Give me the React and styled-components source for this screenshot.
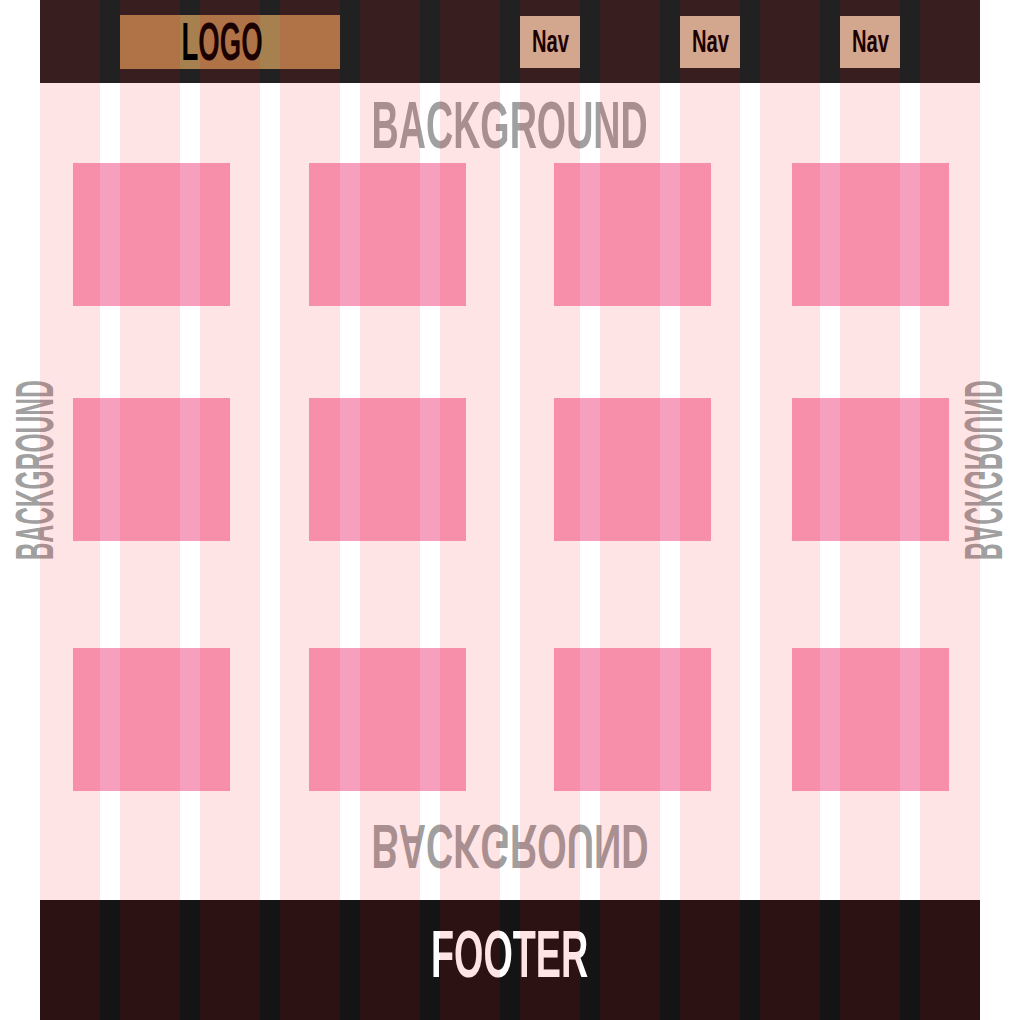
import React from "react";
import styled, { createGlobalStyle, css } from "styled-components";

const GlobalStyle = createGlobalStyle`
  html, body {
    margin: 0;
    padding: 0;
    background: #fff;
  }
  body {
    font-family: "Liberation Sans", Arial, sans-serif;
  }
`;

// narrow display lettering, squeezed with a transform
const condensed = css`
  display: inline-block;
  font-family: "Liberation Sans", Arial, sans-serif;
  font-weight: 700;
  line-height: 1;
  white-space: nowrap;
`;

const Page = styled.div`
  position: relative;
  width: 1020px;
  min-height: 1020px;
  display: flex;
  flex-direction: column;
`;

const Header = styled.header`
  height: 83px;
  margin: 0 40px;
  background: #212121;
  display: grid;
  grid-template-columns: repeat(12, 60px);
  column-gap: 20px;
  align-items: center;
`;

const Logo = styled.a`
  grid-column: 2 / span 3;
  height: 54px;
  padding-right: 15px;
  background: #a6804e;
  display: flex;
  align-items: center;
  justify-content: center;
  text-decoration: none;
`;

const LogoText = styled.span`
  ${condensed}
  font-size: 53px;
  color: #000;
  transform: scaleX(0.52);
`;

const NavItem = styled.a`
  grid-column: ${(p) => p.$col};
  height: 52px;
  background: #cdbb9e;
  display: flex;
  align-items: center;
  justify-content: center;
  text-decoration: none;
`;

const NavText = styled.span`
  ${condensed}
  font-size: 31px;
  color: #000;
  transform: scaleX(0.65);
`;

const Main = styled.main`
  display: flex;
  flex-direction: column;
  padding: 8px 0 22px;
`;

const Banner = styled.div`
  display: flex;
  justify-content: center;
  margin-top: ${(p) => p.$gap || 0}px;
`;

const BannerText = styled.span`
  ${condensed}
  font-size: ${(p) => (p.$flip ? 63 : 67)}px;
  color: #a0a0a0;
  transform: ${(p) => (p.$flip ? "scale(0.6, -1)" : "scaleX(0.562)")};
`;

const Stage = styled.section`
  display: grid;
  grid-template-columns: 68px 1fr 68px;
  align-items: center;
  margin-top: 5px;
`;

const SideText = styled.span`
  ${condensed}
  justify-self: center;
  writing-mode: vertical-rl;
  font-size: 53px;
  color: #a0a0a0;
  margin-bottom: 14px;
  transform: ${(p) =>
    p.$mirror ? "translateX(-3px) scaleY(-0.463)" : "rotate(180deg) scaleY(0.463)"};
`;

const CardGrid = styled.div`
  display: grid;
  grid-template-columns: 236px 245px 238px 157px;
  grid-template-rows: 235px 250px 143px;
  align-items: start;
  padding-left: 5px;
`;

const Card = styled.div`
  width: 157px;
  height: 143px;
  background: #f6a0bd;
`;

const Footer = styled.footer`
  box-sizing: border-box;
  height: 120px;
  margin: 0 40px;
  padding-bottom: 14px;
  background: #141414;
  display: flex;
  align-items: center;
  justify-content: center;
`;

const FooterText = styled.span`
  ${condensed}
  font-size: 67px;
  color: #fff;
  transform: scaleX(0.563);
`;

const ColumnOverlay = styled.div`
  position: absolute;
  top: 0;
  bottom: 0;
  left: 40px;
  right: 40px;
  display: grid;
  grid-template-columns: repeat(12, 60px);
  column-gap: 20px;
  pointer-events: none;
`;

const OverlayColumn = styled.span`
  background: rgba(255, 7, 20, 0.11);
`;

const navCols = [7, 9, 11];

export default function App() {
  return (
    <>
      <GlobalStyle />
      <Page>
        <Header>
          <Logo href="#">
            <LogoText>LOGO</LogoText>
          </Logo>
          {navCols.map((c) => (
            <NavItem key={c} href="#" $col={c}>
              <NavText>Nav</NavText>
            </NavItem>
          ))}
        </Header>

        <Main>
          <Banner>
            <BannerText>BACKGROUND</BannerText>
          </Banner>
          <Stage>
            <SideText>BACKGROUND</SideText>
            <CardGrid>
              {Array.from({ length: 12 }).map((_, i) => (
                <Card key={i} />
              ))}
            </CardGrid>
            <SideText $mirror>BACKGROUND</SideText>
          </Stage>
          <Banner $gap={24}>
            <BannerText $flip>BACKGROUND</BannerText>
          </Banner>
        </Main>

        <Footer>
          <FooterText>FOOTER</FooterText>
        </Footer>

        <ColumnOverlay>
          {Array.from({ length: 12 }).map((_, i) => (
            <OverlayColumn key={i} />
          ))}
        </ColumnOverlay>
      </Page>
    </>
  );
}
